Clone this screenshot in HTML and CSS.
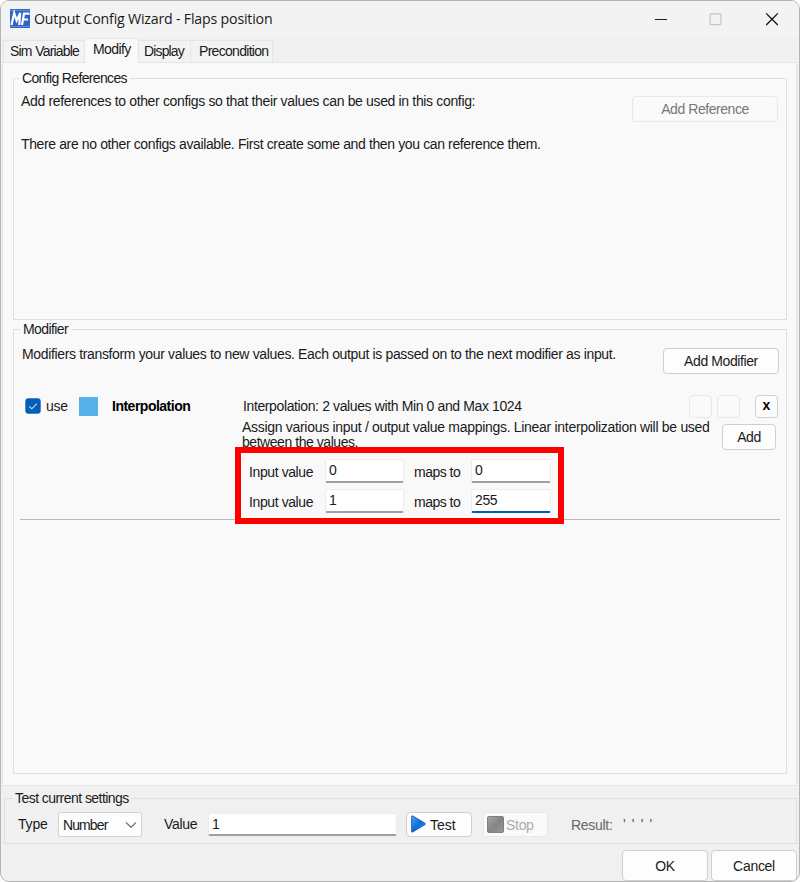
FILE: index.html
```html
<!DOCTYPE html>
<html lang="en">
<head>
<meta charset="utf-8">
<title>Output Config Wizard</title>
<link rel="stylesheet" href="styles.css">
</head>
<body>
<div class="window">
  <header class="titlebar">
    <svg class="logo" width="20" height="19" viewBox="0 0 20 19">
      <rect width="20" height="19" fill="#2f63c8"/>
      <path d="M0 1.5H20M0 17.5H20" stroke="#5b8ae0"/>
      <path d="M1.5 16 4.2 4 6.6 11.5 10.2 4 9.2 16" fill="none" stroke="#fff" stroke-width="2.2"/>
      <path d="M12 16 14 4.6H19.5M13 10.5H18" fill="none" stroke="#fff" stroke-width="2.2"/>
    </svg>
    <span class="title">Output Config Wizard - Flaps position</span>
    <svg class="controls" width="126" height="14" viewBox="0 0 126 14">
      <path d="M1 7.5H13" stroke="#222" stroke-width="1.2"/>
      <rect x="56.1" y="1.9" width="10.8" height="10.8" rx="1" fill="none" stroke="#c4c4c4" stroke-width="1.2"/>
      <path d="M112.2 1.4 123.8 13M123.8 1.4 112.2 13" stroke="#111" stroke-width="1.3"/>
    </svg>
  </header>
  <nav class="tabs">
    <span class="tab tab-sim">Sim Variable</span>
    <span class="tab tab-mod active">Modify</span>
    <span class="tab tab-dis">Display</span>
    <span class="tab tab-pre">Precondition</span>
  </nav>
  <main class="page">
    <fieldset class="group refs">
      <legend class="t-refs">Config References</legend>
      <div class="row">
        <p class="t-addrefs">Add references to other configs so that their values can be used in this config:</p>
        <button class="btn add-ref" disabled>Add Reference</button>
      </div>
      <p class="t-none">There are no other configs available. First create some and then you can reference them.</p>
    </fieldset>
    <fieldset class="group mods">
      <legend class="t-modifier">Modifier</legend>
      <div class="row">
        <p class="t-transform">Modifiers transform your values to new values. Each output is passed on to the next modifier as input.</p>
        <button class="btn add-mod">Add Modifier</button>
      </div>
      <section class="item">
        <div class="item-head">
          <svg class="check" width="16" height="16" viewBox="0 0 16 16"><rect x=".3" y=".3" width="15.4" height="15.4" rx="3.2" fill="#005fb8"/><path d="M4.2 8.3 6.8 10.8 11.8 5.7" fill="none" stroke="#c5ddf2" stroke-width="1.1"/></svg>
          <span class="use">use</span>
          <span class="swatch"></span>
          <b class="name">Interpolation</b>
          <span class="summary">Interpolation: 2 values with Min 0 and Max 1024</span>
          <button class="btn sq" disabled></button>
          <button class="btn sq second" disabled></button>
          <button class="btn sq close">x</button>
        </div>
        <div class="item-body">
          <p class="assign"><span class="t-as1">Assign various input / output value mappings. Linear interpolization will be used</span><br><span class="t-as2">between the values.</span></p>
          <button class="btn add">Add</button>
        </div>
        <div class="mapping">
          <span class="t-iv">Input value</span><span class="field">0</span><span class="t-mt">maps to</span><span class="field">0</span>
          <span class="t-iv">Input value</span><span class="field">1</span><span class="t-mt">maps to</span><span class="field focus">255</span>
        </div>
        <div class="highlight"></div>
      </section>
    </fieldset>
  </main>
  <fieldset class="group test">
    <legend class="t-test">Test current settings</legend>
    <div class="test-row">
      <span class="t-type">Type</span>
      <span class="select"><span class="t-number">Number</span><svg width="12" height="8" viewBox="0 0 12 8"><path d="M1 1.5 6 6.3 11 1.5" fill="none" stroke="#777" stroke-width="1.2"/></svg></span>
      <span class="t-value">Value</span>
      <span class="field wide">1</span>
      <button class="btn run"><svg width="15" height="18" viewBox="0 0 15 18"><defs><linearGradient id="g" x2="1" y2="1"><stop stop-color="#55aaf5"/><stop offset=".5" stop-color="#0872dc"/><stop offset="1" stop-color="#1990f8"/></linearGradient></defs><path d="M.7 1.2Q.8.5 1.7.9L14 8.3Q14.7 9 14 9.6L1.7 17Q.8 17.4.7 16.6Z" fill="url(#g)" stroke="#1551ad" stroke-width=".9"/></svg><span class="t-run">Test</span></button>
      <button class="btn stop" disabled><svg width="17" height="17" viewBox="0 0 17 17"><defs><linearGradient id="s" x2="1" y2="1"><stop stop-color="#aaa"/><stop offset=".5" stop-color="#858585"/><stop offset="1" stop-color="#989898"/></linearGradient></defs><rect x=".6" y=".6" width="15.8" height="15.8" rx="1" fill="url(#s)" stroke="#777"/></svg><span class="t-stop">Stop</span></button>
      <span class="result">Result:</span><span class="ticks">''''</span>
    </div>
  </fieldset>
  <footer class="footer">
    <button class="btn ok">OK</button>
    <button class="btn cancel">Cancel</button>
  </footer>
</div>
</body>
</html>
```

FILE: styles.css
```css
* { box-sizing: border-box; }
body { margin: 0; background: #fff; font: 14px/16px "Liberation Sans", Arial, sans-serif; color: #1a1a1a; white-space: nowrap; }
p { margin: 0; }
.window { width: 800px; height: 882px; border: 1px solid #b5b5b5; border-radius: 9px; background: #f0f0f0; overflow: hidden; }
.titlebar { height: 37px; background: #f3f3f3; display: flex; align-items: center; padding: 0 19px 2px 9px; }
.title { font: 14.2px/20px "Open Sans", sans-serif; letter-spacing: -.2px; margin-left: 4px; }
.controls { margin-left: auto; }
.tabs { height: 24px; display: flex; align-items: flex-end; padding-left: 2px; }
.tab { height: 22px; border: 1px solid #e5e5e5; border-bottom: 0; background: #f3f3f3; line-height: 21px; padding-left: 6px; }
.tab + .tab { border-left: 0; }
.tab.active { height: 25px; background: #f9f9f9; line-height: 21px; padding-left: 8px; margin-bottom: -1px; position: relative; letter-spacing: -.6px; }
.tab-sim { width: 82px; letter-spacing: -.82px; }
.tab-mod { width: 54px; }
.tab-dis { width: 52px; padding-left: 5px; letter-spacing: -.85px; }
.tab-pre { width: 82px; padding-left: 8px; letter-spacing: -.7px; }
.tab-sim, .tab-dis, .tab-pre { word-spacing: .5px; }
.page { height: 724px; margin: 0 2px 0 1px; border: 1px solid #e5e5e5; background: #f9f9f9; padding: 7px 9px 0 10px; }
.group { margin: 0; min-width: 0; border: 1px solid #dfdfdf; padding: 0; }
legend { height: 16px; margin-left: 7px; padding: 0 3px 0 2px; }
.t-refs { letter-spacing: -.65px; }
.t-modifier { letter-spacing: -.6px; }
.t-addrefs { letter-spacing: -.345px; }
.t-none { letter-spacing: -.375px; }
.t-transform { letter-spacing: -.35px; }
.refs { height: 250px; }
.refs legend { margin-left: 6px; }
.row { display: flex; justify-content: space-between; align-items: flex-start; }
.refs .row { padding: 7px 8px 0 7px; height: 50px; }
.refs .t-none { padding-left: 7px; }
.btn { font: inherit; color: #1a1a1a; background: #fdfdfd; border: 1px solid #cfcfcf; border-radius: 4px; padding: 0; display: flex; align-items: center; justify-content: center; flex: none; }
.btn:disabled { border-color: #e8e8e8; background: #fafafa; color: #777; }
.add-ref { width: 146px; height: 26px; margin-top: 3px; letter-spacing: -.45px; }
.mods { height: 453px; margin-top: 1px; }
.mods .row { padding: 9px 7px 0 8px; height: 57px; }
.add-mod { width: 116px; height: 26px; margin-top: 2px; letter-spacing: -.4px; }
.item { position: relative; margin: 0 6px; height: 126px; border-bottom: 1px solid #b9b9b9; }
.item-head { display: flex; align-items: center; height: 24px; padding: 0 1px 0 5px; }
.use { width: 33px; margin-left: 5px; letter-spacing: -.3px; }
.swatch { width: 19px; height: 19px; background: #56b2e8; }
.name { width: 131px; margin-left: 14px; color: #000; letter-spacing: -.5px; }
.summary { width: 446px; flex: none; letter-spacing: -.38px; }
.sq { width: 23px; height: 23px; }
.second { margin-left: 5px; }
.close { margin-left: 15px; font-weight: bold; padding-bottom: 2px; color: #000; }
.item-body { display: flex; justify-content: space-between; padding: 0 4px 0 222px; height: 38px; }
.assign { line-height: 15px; padding-top: 2px; }
.t-as1 { letter-spacing: -.3px; }
.t-as2 { letter-spacing: -.45px; }
.add { width: 54px; height: 26px; margin-top: 6px; letter-spacing: -.4px; }
.mapping { display: grid; grid-template-columns: 76px 79px 67px 80px; row-gap: 6px; padding: 3px 0 0 229px; align-items: center; }
.mapping .t-mt { padding: 2px 0 0 10px; letter-spacing: -.5px; }
.t-iv { padding-top: 2px; letter-spacing: -.4px; }
.field { height: 24px; background: #fff; border: 1px solid #ececec; border-bottom: 2px solid #a0a0a0; border-radius: 2px; padding-left: 3px; line-height: 21px; letter-spacing: -.4px; }
.field.focus { border-bottom-color: #0a5bb0; }
.highlight { position: absolute; left: 215px; top: 53px; width: 329px; height: 77px; border: 6px solid #f00; }
.test { height: 54px; margin: 4px 2px 0 3px; }
.t-test { margin-left: 8px; letter-spacing: -.55px; }
.test-row { display: flex; align-items: center; height: 26px; margin-top: 5px; padding-left: 13px; }
.t-type { width: 40px; letter-spacing: -.2px; }
.select { width: 84px; height: 25px; background: #fdfdfd; border: 1px solid #d2d2d2; border-radius: 2px; display: flex; align-items: center; justify-content: space-between; padding: 2px 4px 0; }
.t-number { letter-spacing: -.9px; }
.t-value { margin-left: 22px; width: 44px; letter-spacing: -.3px; }
.wide { width: 189px; height: 23px; }
.run { width: 66px; height: 25px; margin-left: 9px; justify-content: flex-start; padding-left: 4px; gap: 4px; }
.stop { width: 65px; height: 25px; margin-left: 11px; justify-content: flex-start; padding-left: 3px; gap: 2px; letter-spacing: -.3px; }
.t-run, .t-stop, .result { padding-top: 2px; }
.btn:disabled .t-stop { color: #aaa; }
.result { margin-left: 23px; color: #666; width: 52px; letter-spacing: -.3px; }
.ticks { color: #555; letter-spacing: 6.2px; }
.footer { display: flex; justify-content: flex-end; gap: 3px; padding: 6px 2px 0 0; }
.footer .btn { width: 86px; height: 31px; letter-spacing: -.3px; }
```
